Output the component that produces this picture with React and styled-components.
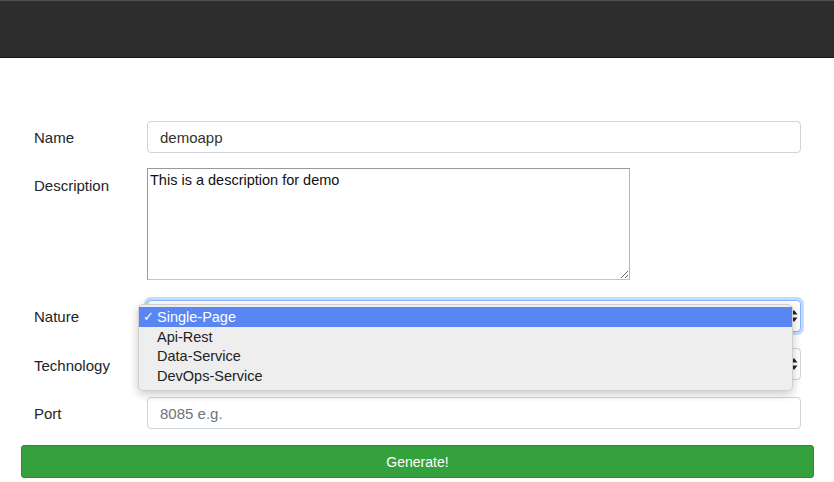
import styled, { createGlobalStyle } from "styled-components";

const GlobalStyle = createGlobalStyle`
  body {
    margin: 0;
    background: #fff;
    font-family: "Liberation Sans", Arial, sans-serif;
    color: #212529;
  }
`;

const natures = ["Single-Page", "Api-Rest", "Data-Service", "DevOps-Service"];

const App = () => {
  return (
    <>
      <GlobalStyle />
      <TopBar />
      <Form>
        <Row>
          <Label>Name</Label>
          <Input defaultValue="demoapp" />
        </Row>
        <Row $gap={15}>
          <Label $top={6}>Description</Label>
          <TextArea defaultValue="This is a description for demo" />
        </Row>
        <Row $gap={20}>
          <Label>Nature</Label>
          <Field>
            <Select $focused>
              <SelectArrows />
            </Select>
            <Menu>
              {natures.map((n, i) => (
                <MenuItem key={n} $active={i === 0}>
                  <Check>{i === 0 ? "✓" : ""}</Check>
                  {n}
                </MenuItem>
              ))}
            </Menu>
          </Field>
        </Row>
        <Row $gap={16}>
          <Label $top={6}>Technology</Label>
          <Field>
            <Select>
              <SelectArrows />
            </Select>
          </Field>
        </Row>
        <Row $gap={17}>
          <Label>Port</Label>
          <Input placeholder="8085 e.g." />
        </Row>
        <Button>Generate!</Button>
      </Form>
    </>
  );
};

const SelectArrows = () => (
  <Arrows width="8" height="14" viewBox="0 0 8 14">
    <path d="M4 1 L7.5 5.5 L0.5 5.5 Z" fill="#222" />
    <path d="M4 13 L7.5 8.5 L0.5 8.5 Z" fill="#222" />
  </Arrows>
);

const TopBar = styled.header`
  height: 56px;
  background: #2d2d2d;
  border-top: 1px solid #4f4f4f;
  border-bottom: 1px solid #141414;
`;

const Form = styled.form`
  padding: 63px 20px 0 21px;
  display: flex;
  flex-direction: column;
`;

const Row = styled.div`
  display: flex;
  align-items: flex-start;
  padding: 0 13px;
  margin-top: ${(p) => p.$gap || 0}px;
`;

const Label = styled.label`
  width: 113px;
  flex-shrink: 0;
  font-size: 15px;
  line-height: 24px;
  padding-top: ${(p) => p.$top ?? 5}px;
  color: #212529;
`;

const Input = styled.input`
  flex: 1;
  height: 32px;
  box-sizing: border-box;
  border: 1px solid #ced4da;
  border-radius: 4px;
  padding: 0 12px;
  font-family: "Liberation Sans", Arial, sans-serif;
  font-size: 15px;
  color: #333;
  outline: none;

  &::placeholder {
    color: #6c757d;
  }
`;

const TextArea = styled.textarea`
  width: 483px;
  height: 112px;
  box-sizing: border-box;
  border: 1px solid #9a9a9a;
  border-right-color: #b5b5b5;
  border-bottom-color: #c4c4c4;
  border-radius: 0;
  padding: 3px 2px;
  font-family: "Liberation Sans", Arial, sans-serif;
  font-size: 14.5px;
  color: #111;
  outline: none;
  resize: both;
`;

const Field = styled.div`
  flex: 1;
  position: relative;
`;

const Select = styled.div`
  height: 32px;
  box-sizing: border-box;
  border: 1px solid ${(p) => (p.$focused ? "#86b7fe" : "#ced4da")};
  border-radius: 4px;
  box-shadow: ${(p) =>
    p.$focused ? "0 0 0 3px rgba(90, 150, 250, 0.35)" : "none"};
  display: flex;
  align-items: center;
  justify-content: flex-end;
  padding-right: 2px;
  background: #fff;
`;

const Arrows = styled.svg`
  display: block;
`;

const Menu = styled.ul`
  position: absolute;
  top: 4px;
  left: -9px;
  width: 653px;
  margin: 0;
  padding: 2px 0 4px;
  list-style: none;
  background: #eeeeee;
  border: 1px solid #cfcfcf;
  border-radius: 5px;
  box-shadow: 0 3px 10px rgba(0, 0, 0, 0.22);
  z-index: 5;
`;

const MenuItem = styled.li`
  height: 19.7px;
  display: flex;
  align-items: center;
  font-size: 14.5px;
  color: ${(p) => (p.$active ? "#fff" : "#222")};
  background: ${(p) => (p.$active ? "#5886f3" : "transparent")};
`;

const Check = styled.span`
  width: 18px;
  padding-left: 4px;
  box-sizing: border-box;
  font-family: "DejaVu Sans", sans-serif;
  font-size: 13px;
`;

const Button = styled.button`
  margin-top: 16px;
  height: 33px;
  width: 793px;
  background: #34a13c;
  border: 1px solid #23922b;
  border-radius: 3px;
  color: #fff;
  font-family: "Liberation Sans", Arial, sans-serif;
  font-size: 14px;
  cursor: pointer;
`;

export default App;
